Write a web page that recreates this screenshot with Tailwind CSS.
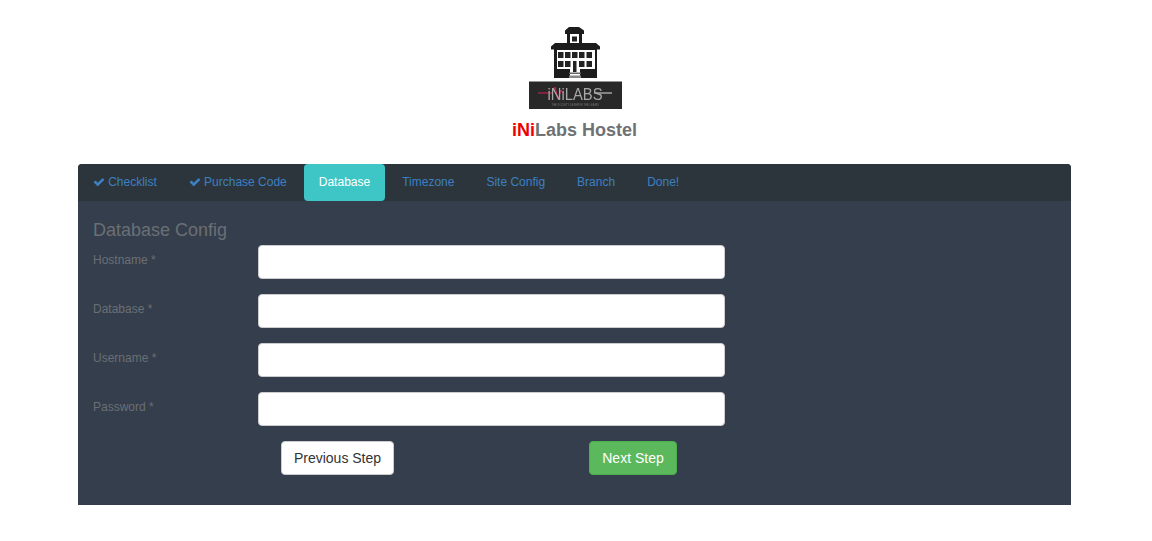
<!DOCTYPE html>
<html>
<head>
<meta charset="utf-8">
<script src="https://cdn.jsdelivr.net/npm/@tailwindcss/browser@4"></script>
</head>
<body class="bg-white font-['Liberation_Sans',Arial,sans-serif]">
<div class="w-[1149px] h-[541px] flex flex-col items-center pt-[27px] overflow-hidden">
  <svg class="w-[94px] h-[83px] block blur-[0.45px]" viewBox="0 0 94 83">
    <!-- cupola -->
    <path fill="#1c1c1c" d="M41 0 H51 L56 3.5 V7 H54 V17 H39 V7 H37 V3.5 Z"/>
    <rect x="42" y="7" width="9" height="9" fill="#fff"/>
    <rect x="44" y="9.5" width="5" height="5" fill="#222"/>
    <!-- roof -->
    <path fill="#1c1c1c" d="M27 16 H68 L72 19.5 V22.5 H23 V19.5 Z"/>
    <!-- body -->
    <rect x="26" y="22" width="43" height="29" fill="#1c1c1c"/>
    <rect x="29" y="23" width="38" height="19" fill="#fff"/>
    <g fill="#222">
      <rect x="30" y="25" width="5.5" height="6"/><rect x="37" y="25" width="5.5" height="6"/><rect x="44" y="25" width="5.5" height="6"/><rect x="51" y="25" width="5.5" height="6"/><rect x="58.5" y="25" width="5.5" height="6"/>
      <rect x="30" y="34" width="5.5" height="6"/><rect x="37" y="34" width="5.5" height="6"/><rect x="51" y="34" width="5.5" height="6"/><rect x="58.5" y="34" width="5.5" height="6"/>
      <rect x="45" y="34" width="3.5" height="10"/>
    </g>
    <!-- steps -->
    <rect x="42" y="42" width="10" height="9" fill="#fff"/>
    <rect x="45" y="42" width="3.5" height="3" fill="#222"/>
    <rect x="41" y="45.5" width="12" height="1.5" fill="#666"/>
    <rect x="41" y="48.5" width="12" height="2.5" fill="#888"/>
    <!-- banner -->
    <rect x="1" y="54.5" width="93" height="27.5" fill="#282828"/>
    <path d="M10 66 H24 L27 60 L30 72 L33 63 L35 66" stroke="#d0204f" stroke-width="1" fill="none"/>
    <path d="M66 66 H84" stroke="#ddd" stroke-width="1" fill="none"/>
    <text x="47" y="72.5" text-anchor="middle" font-family="Liberation Sans" font-size="16" fill="#a8a8a8" textLength="55" lengthAdjust="spacingAndGlyphs">iNiLABS</text>
    <text x="47" y="78.5" text-anchor="middle" font-family="Liberation Sans" font-size="2.8" fill="#777" textLength="47" lengthAdjust="spacingAndGlyphs">THE SOCIETY DESERVE THE LEARN</text>
  </svg>
  <h1 class="mt-[10px] text-[18px] leading-[20px] font-bold text-[#6f7275]"><span class="text-[#f00000]">iNi</span>Labs Hostel</h1>

  <div class="mt-[24px] w-[993px] h-[341px] rounded-t-[4px] bg-[#343e4c] overflow-hidden">
    <nav class="h-[37px] bg-[#2d353c] flex text-[12px] leading-[37px] text-[#3c80c2]">
      <a class="px-[15px] mr-[2px] flex items-center gap-[3.2px]">
        <svg class="w-[12px] h-[12px] -mt-[2px]" viewBox="0 0 1792 1792" fill="#3c80c2"><path d="M1671 566q0 40-28 68l-724 724-136 136q-28 28-68 28t-68-28l-136-136-362-362q-28-28-28-68t28-68l136-136q28-28 68-28t68 28l294 295 656-657q28-28 68-28t68 28l136 136q28 28 28 68z"/></svg>
        Checklist</a>
      <a class="px-[15px] mr-[2px] flex items-center gap-[3.2px]">
        <svg class="w-[12px] h-[12px] -mt-[2px]" viewBox="0 0 1792 1792" fill="#3c80c2"><path d="M1671 566q0 40-28 68l-724 724-136 136q-28 28-68 28t-68-28l-136-136-362-362q-28-28-28-68t28-68l136-136q28-28 68-28t68 28l294 295 656-657q28-28 68-28t68 28l136 136q28 28 28 68z"/></svg>
        Purchase Code</a>
      <a class="px-[15px] mr-[2px] bg-[#3ec6c6] text-white rounded-[4px]">Database</a>
      <a class="px-[15px] mr-[2px]">Timezone</a>
      <a class="px-[15px] mr-[2px]">Site Config</a>
      <a class="px-[15px] mr-[2px]">Branch</a>
      <a class="px-[15px] mr-[2px]">Done!</a>
    </nav>
    <div class="px-[15px]">
      <h2 class="mt-[19px] text-[18px] leading-[20px] text-[#6b6f74]">Database Config</h2>
      <form class="mt-[5px] flex flex-col gap-[15px]">
        <div class="flex items-start">
          <label class="w-[165px] pt-[8px] text-[12px] leading-[14px] text-[#6b6f74]">Hostname *</label>
          <input class="w-[467px] h-[34px] bg-white border border-[#ccc] rounded-[4px]">
        </div>
        <div class="flex items-start">
          <label class="w-[165px] pt-[8px] text-[12px] leading-[14px] text-[#6b6f74]">Database *</label>
          <input class="w-[467px] h-[34px] bg-white border border-[#ccc] rounded-[4px]">
        </div>
        <div class="flex items-start">
          <label class="w-[165px] pt-[8px] text-[12px] leading-[14px] text-[#6b6f74]">Username *</label>
          <input class="w-[467px] h-[34px] bg-white border border-[#ccc] rounded-[4px]">
        </div>
        <div class="flex items-start">
          <label class="w-[165px] pt-[8px] text-[12px] leading-[14px] text-[#6b6f74]">Password *</label>
          <input class="w-[467px] h-[34px] bg-white border border-[#ccc] rounded-[4px]">
        </div>
        <div class="flex pl-[188px]">
          <button type="button" class="w-[113px] h-[34px] bg-white border border-[#ccc] rounded-[4px] text-[14px] text-[#333]">Previous Step</button>
          <button type="button" class="ml-[195px] w-[88px] h-[34px] bg-[#5cb85c] border border-[#4cae4c] rounded-[4px] text-[14px] text-white">Next Step</button>
        </div>
      </form>
    </div>
  </div>
</div>
</body>
</html>
